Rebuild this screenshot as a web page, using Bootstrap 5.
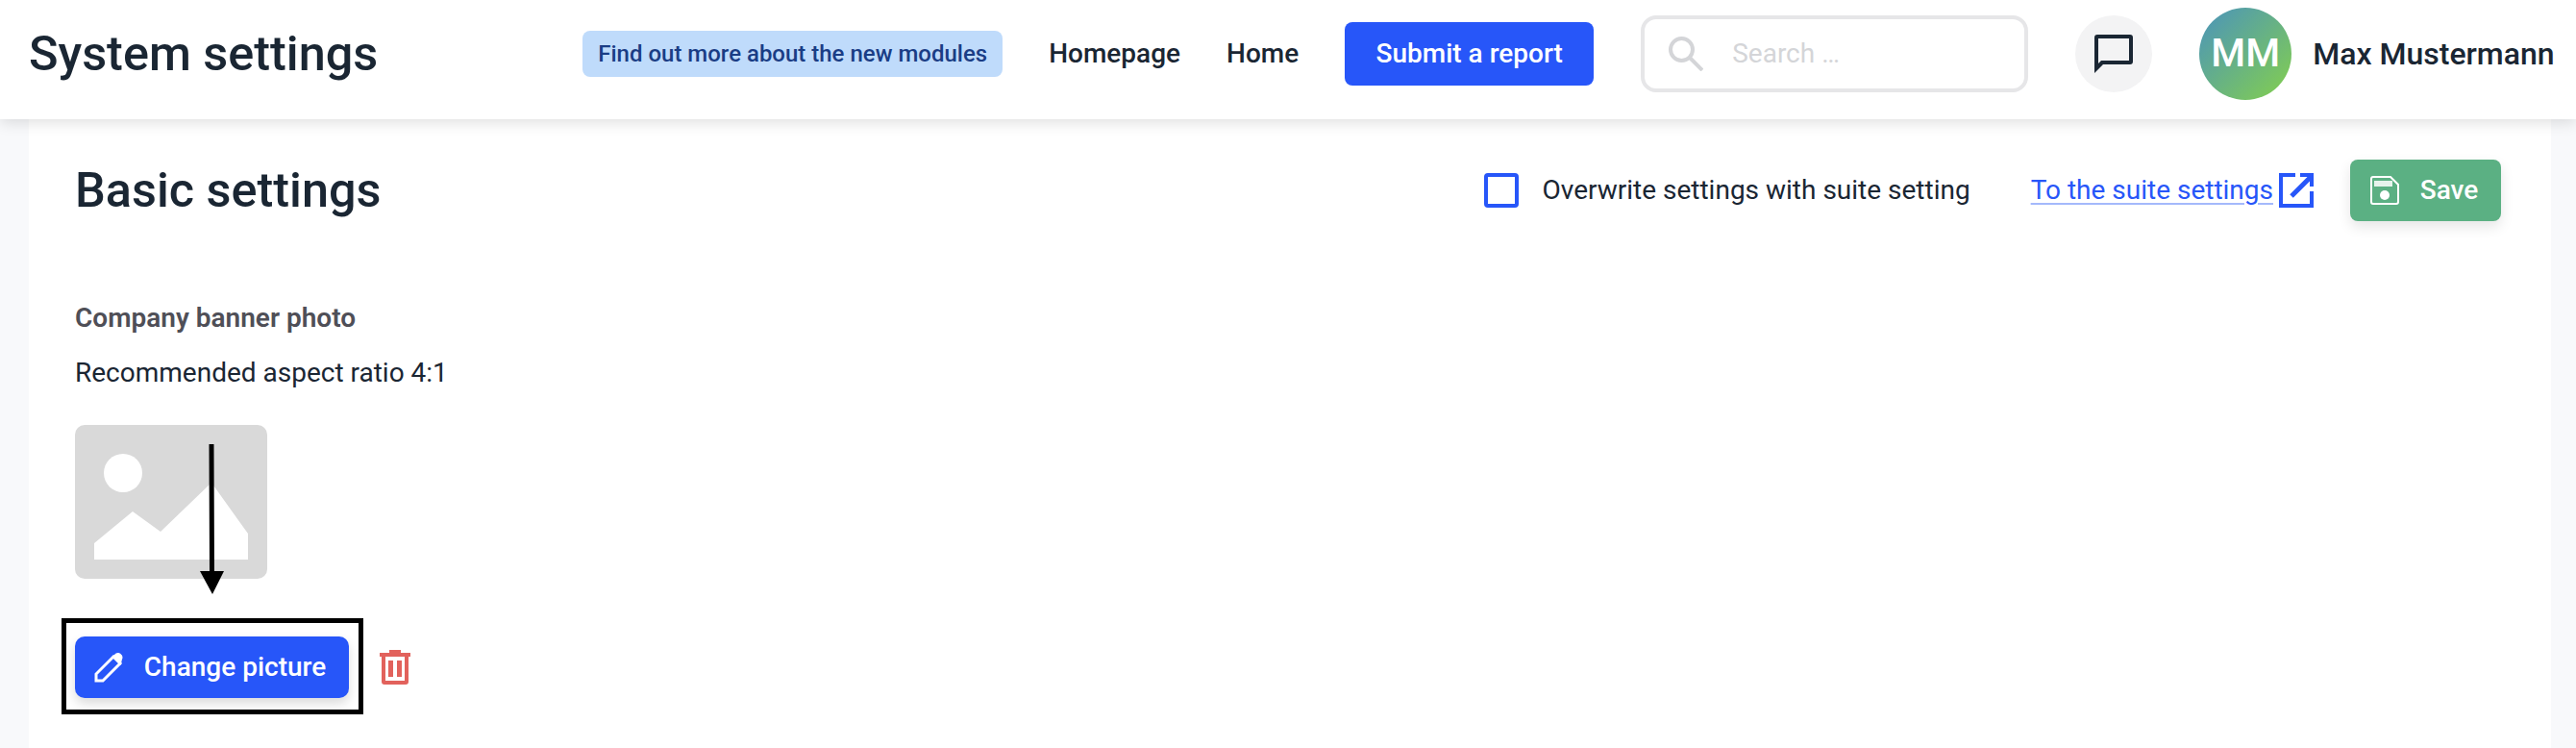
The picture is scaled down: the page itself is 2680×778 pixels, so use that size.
<!DOCTYPE html>
<html lang="en">
<head>
    <meta charset="UTF-8">
    <meta name="viewport" content="width=device-width, initial-scale=1.0">
    <title>System settings</title>
    <link rel="stylesheet" href="https://cdn.jsdelivr.net/npm/bootstrap@5.3.0/dist/css/bootstrap.min.css">
    <style>
        html, body { height: 100%; }
        body { background: #f8f9fb; font-family: Roboto, "Liberation Sans", sans-serif; color: #1a2633; overflow: hidden; }
        .top-bar { height: 124px; padding: 0 21px 12px 30px; background: #fff; box-shadow: 0 4px 14px rgba(0,0,0,.12); position: relative; z-index: 2; }
        .page-title { font-size: 50.4px; font-weight: 500; margin: 0; color: #1a2633; line-height: 1; }
        .info-pill { margin-left: 213px; width: 437px; height: 48px; background: #bfdbfb; color: #1a3d85; font-size: 24px; font-weight: 500; border-radius: 8px; white-space: nowrap; }
        .top-link { font-size: 28px; font-weight: 500; color: #1a2633; text-decoration: none; }
        .link-home { margin-left: 48px; }
        .link-first { margin-left: 48px; }
        .btn-report { margin-left: 48px; width: 259px; height: 66px; background: #2756f9; border: 0; border-radius: 8px; color: #fff; font-size: 28px; font-weight: 500; padding: 0; }
        .search-box { margin-left: 49px; width: 403px; height: 80px; border: 4px solid #e6e6e8; border-radius: 16px; padding-left: 25px; background: #fff; }
        .search-box input { border: 0; outline: 0; font-size: 28px; margin-left: 30px; width: 300px; padding: 0; background: transparent; }
        .search-box input::placeholder { color: #d4d5d8; }
        .chat-btn { margin-left: 49px; width: 80px; height: 80px; background: #f3f3f4; border-radius: 50%; }
        .avatar-mm { margin-left: 49px; width: 96px; height: 96px; border-radius: 50%; background: linear-gradient(135deg, #4a93bd, #84d04c); color: #fff; font-size: 41px; font-weight: 500; }
        .user-name { margin-left: 22px; font-size: 32px; font-weight: 500; color: #1a2633; white-space: nowrap; }
        .settings-panel { margin: 0 26px 0 30px; height: 654px; background: #fff; padding: 42px 52px 0 48px; position: relative; }
        .panel-title { font-size: 50.4px; font-weight: 500; margin: 0; line-height: 64px; color: #1a2633; }
        .check-box { width: 36px; height: 36px; border: 4px solid #2756f9; border-radius: 4px; }
        .check-text { margin-left: 24px; font-size: 28px; }
        .suite-link { margin-left: 63px; font-size: 28px; color: #2756f9; text-decoration-color: #a4b9fb; text-underline-offset: 4px; }
        .ext-icon { margin-left: 6px; margin-right: 38px; }
        .btn-save { width: 157px; height: 64px; background: #5bb083; border: 0; border-radius: 8px; color: #fff; font-size: 28px; font-weight: 500; box-shadow: 0 6px 14px rgba(0,0,0,.1); padding: 0 3px 0 0; }
        .btn-save svg { margin-right: 22px; }
        .field-label { font-size: 28px; font-weight: 600; color: #4f4f57; margin: 0; line-height: 36px; margin-top: 83px; }
        .field-help { font-size: 28px; margin: 0; line-height: 36px; margin-top: 21px; }
        .pic-wrap { margin-top: 36px; position: relative; width: 200px; height: 160px; }
        .pic-arrow { position: absolute; left: 130px; top: 20px; }
        .action-row { margin-top: 60px; position: relative; }
        .btn-change { width: 285px; height: 64px; background: #2756f9; border: 0; border-radius: 10px; color: #fff; font-size: 28px; font-weight: 500; box-shadow: 0 6px 12px rgba(0,0,0,.14); padding: 0 4px 0 0; }
        .btn-change svg { margin-right: 22px; }
        .trash-icon { margin-left: 32px; }
        .mark-frame { position: absolute; left: -14px; top: -19px; width: 314px; height: 100px; border: 5px solid #000; pointer-events: none; }
    </style>
</head>
<body>
    <header class="top-bar d-flex align-items-center">
        <h1 class="page-title">System settings</h1>
        <div class="info-pill d-flex align-items-center justify-content-center">Find out more about the new modules</div>
        <a href="#" class="top-link link-first">Homepage</a>
        <a href="#" class="top-link link-home">Home</a>
        <button type="button" class="btn btn-report">Submit a report</button>
        <div class="search-box d-flex align-items-center">
            <svg width="36" height="36" viewBox="0 0 36 36" fill="none" stroke="#d4d5d8" stroke-width="4"><circle cx="13.5" cy="13.5" r="11.5"/><path d="M22 22l13 13"/></svg>
            <input type="text" placeholder="Search …">
        </div>
        <div class="chat-btn d-flex align-items-center justify-content-center">
            <svg width="40" height="40" viewBox="0 0 40 40"><path fill-rule="evenodd" d="M0 40V3a3 3 0 0 1 3-3h34a3 3 0 0 1 3 3v25a3 3 0 0 1-3 3H9zM4 4v26l3-3h29V4z" fill="#1a2633"/></svg>
        </div>
        <div class="avatar-mm d-flex align-items-center justify-content-center">MM</div>
        <div class="user-name">Max Mustermann</div>
    </header>

    <main class="settings-panel">
        <div class="d-flex align-items-center">
            <h2 class="panel-title me-auto">Basic settings</h2>
            <div class="check-box"></div>
            <span class="check-text">Overwrite settings with suite setting</span>
            <a href="#" class="suite-link">To the suite settings</a>
            <svg class="ext-icon" width="36" height="36" viewBox="0 0 36 36" fill="none" stroke="#2756f9" stroke-width="4"><path d="M17 2H2v32h32V19"/><path d="M13 24L33 4" stroke-width="5"/><path d="M22 2h12v12"/></svg>
            <button type="button" class="btn btn-save d-flex align-items-center justify-content-center">
                <svg width="30" height="30" viewBox="0 0 30 30"><path d="M3 1h18l8 8v18a2 2 0 0 1-2 2H3a2 2 0 0 1-2-2V3a2 2 0 0 1 2-2z" fill="none" stroke="#fff" stroke-width="2"/><rect x="4" y="5" width="19" height="6" fill="#fff" opacity=".85"/><circle cx="15" cy="20" r="5" fill="#fff"/></svg>Save
            </button>
        </div>
        <p class="field-label">Company banner photo</p>
        <p class="field-help">Recommended aspect ratio 4:1</p>
        <div class="pic-wrap">
            <svg width="200" height="160" viewBox="0 0 200 160"><rect width="200" height="160" rx="10" fill="#d9d9d9"/><circle cx="50" cy="50" r="20" fill="#fff"/><path d="M20 140v-17l40-33 29 21 53-51 38 53v27z" fill="#fff"/></svg>
            <svg class="pic-arrow" width="25" height="156" viewBox="0 0 25 156"><path d="M9.5 0h5l.5 132h10L13 156 0 132h10z" fill="#000"/></svg>
        </div>
        <div class="action-row d-flex align-items-center">
            <button type="button" class="btn btn-change d-flex align-items-center justify-content-center">
                <svg width="30" height="31" viewBox="0 0 30 31" fill="none" stroke="#fff" stroke-width="3"><path d="M2 29v-7L20 4l7 7L9 29z"/><path d="M20 4l3-2.500q2-1 3.500 0l1.500 1.500q1 2 0 3.500L27 11z" fill="#fff" stroke-width="2"/></svg>Change picture
            </button>
            <svg class="trash-icon" width="32" height="36" viewBox="0 0 32 36"><path d="M0 3h10V0h12v3h10v4h-2v26a3 3 0 0 1-3 3H5a3 3 0 0 1-3-3V7H0zM6 7v25h20V7z" fill="#e2625c"/><rect x="9" y="11" width="5" height="17" fill="#e2625c"/><rect x="18" y="11" width="5" height="17" fill="#e2625c"/></svg>
            <div class="mark-frame"></div>
        </div>
    </main>
    <script src="https://cdn.jsdelivr.net/npm/bootstrap@5.3.0/dist/js/bootstrap.bundle.min.js"></script>
</body>
</html>
